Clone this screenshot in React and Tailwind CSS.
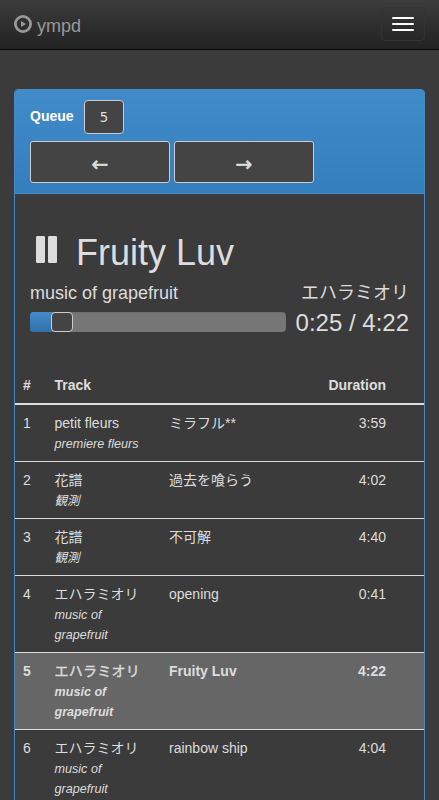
import React from "react";

const tracks = [
  { n: 1, artist: "petit fleurs", album: "premiere fleurs", title: "ミラフル**", time: "3:59" },
  { n: 2, artist: "花譜", album: "観測", title: "過去を喰らう", time: "4:02" },
  { n: 3, artist: "花譜", album: "観測", title: "不可解", time: "4:40" },
  { n: 4, artist: "エハラミオリ", album: "music of grapefruit", title: "opening", time: "0:41" },
  { n: 5, artist: "エハラミオリ", album: "music of grapefruit", title: "Fruity Luv", time: "4:22", active: true },
  { n: 6, artist: "エハラミオリ", album: "music of grapefruit", title: "rainbow ship", time: "4:04" },
];

function Navbar() {
  return (
    <nav className="flex h-[50px] items-start justify-between border-b border-[#080808] bg-gradient-to-b from-[#3c3c3c] to-[#222222] px-[14px]">
      <div className="flex h-[50px] items-center text-[18px] leading-5 text-[#999999]">
        <svg className="-mt-[2px] mr-[5px] h-[18px] w-[18px]" viewBox="0 0 18 18">
          <circle cx="9" cy="9" r="7.6" fill="none" stroke="currentColor" strokeWidth="2.8" />
          <path d="M7 6v6l5-3z" fill="currentColor" />
        </svg>
        <span className="mt-px">ympd</span>
      </div>
      <button className="mt-[7px] flex h-[34px] w-11 flex-col items-center justify-center gap-1 rounded border border-[#333333]">
        <span className="h-[2px] w-[22px] rounded-[1px] bg-white" />
        <span className="h-[2px] w-[22px] rounded-[1px] bg-white" />
        <span className="h-[2px] w-[22px] rounded-[1px] bg-white" />
      </button>
    </nav>
  );
}

function PanelHeading() {
  return (
    <div className="h-[104px] rounded-t-[3px] border-b border-[#428bca] bg-gradient-to-b from-[#428bca] to-[#357ebd] px-[15px] pt-[10px]">
      <div className="flex items-start">
        <b className="mt-[6px] w-[54px] text-[14px] leading-5 text-white">Queue</b>
        <div className="flex h-[34px] w-10 items-center justify-center rounded border border-[#cccccc] bg-[#444444] font-['DejaVu_Sans_Mono',monospace] text-[14px] text-[#dddddd]">
          5
        </div>
      </div>
      <div className="mt-[7px] flex gap-1 font-['DejaVu_Sans',sans-serif] text-[20px] leading-none text-[#dddddd] [-webkit-text-stroke:0.6px_#dddddd]">
        <button className="h-[42px] w-[140px] rounded-[3px] border border-[#cccccc] bg-[#444444] pt-[3px]">←</button>
        <button className="h-[42px] w-[140px] rounded-[3px] border border-[#cccccc] bg-[#444444] pt-[3px]">→</button>
      </div>
    </div>
  );
}

function NowPlaying() {
  return (
    <div className="h-[173px] px-[15px] pt-[39px]">
      <div className="flex h-10 items-center">
        <svg className="-mt-[7px] ml-[6px] mr-[19px] h-[27px] w-[21px]" viewBox="0 0 21 27" fill="#dddddd">
          <rect x="0" y="0" width="9" height="27" rx="1.2" />
          <rect x="12" y="0" width="9" height="27" rx="1.2" />
        </svg>
        <h1 className="text-[36px] leading-10">Fruity Luv</h1>
      </div>
      <div className="mt-[10px] flex justify-between text-[18px] leading-5">
        <span>music of grapefruit</span>
        <span>エハラミオリ</span>
      </div>
      <div className="mt-[7px] flex h-[26px] items-center justify-between">
        <div className="mb-[2px] flex h-5 w-[256px] rounded bg-[#777777] shadow-[inset_0_1px_2px_rgba(0,0,0,0.1)]">
          <div className="h-5 w-[23px] rounded-l bg-gradient-to-b from-[#428bca] to-[#3071a9]" />
          <div className="-ml-[2px] h-5 w-[22px] rounded border border-[#cccccc] bg-[#444444]" />
        </div>
        <span className="text-[24px] leading-[26px]">0:25 / 4:22</span>
      </div>
    </div>
  );
}

function TrackTable() {
  return (
    <table className="w-full table-fixed border-collapse text-[14px] leading-5">
      <colgroup>
        <col className="w-[31.5px]" />
        <col className="w-[114.5px]" />
        <col />
        <col className="w-[80px]" />
        <col className="w-[30px]" />
      </colgroup>
      <thead>
        <tr className="border-b-2 border-[#dddddd] text-left">
          <th className="p-2">#</th>
          <th className="p-2">Track</th>
          <th className="p-2" />
          <th className="p-2 text-right">Duration</th>
          <th />
        </tr>
      </thead>
      <tbody>
        {tracks.map((t) => (
          <tr
            key={t.n}
            className={
              t.active
                ? "border-b border-[#dddddd] bg-[#666666] align-top font-bold"
                : "border-b border-[#dddddd] align-top"
            }
          >
            <td className="p-2">{t.n}</td>
            <td className="p-2">
              <div
                className={
                  t.active
                    ? "h-[21px] whitespace-nowrap font-normal tracking-[0.25px] [-webkit-text-stroke:0.4px_#dddddd]"
                    : "h-[21px]"
                }
              >
                {t.artist}
              </div>
              <div className="-mb-px text-[12.6px] italic">{t.album}</div>
            </td>
            <td className="p-2">
              <div className="h-5">{t.title}</div>
            </td>
            <td className="p-2 text-right">{t.time}</td>
            <td />
          </tr>
        ))}
      </tbody>
    </table>
  );
}

export default function App() {
  return (
    <div className="h-[800px] overflow-hidden bg-[#3b3b3b] font-['Liberation_Sans','Noto_Sans_CJK_JP',sans-serif] text-[#dddddd]">
      <Navbar />
      <main className="ml-[14px] mt-[39px] w-[411px] rounded border border-[#428bca]">
        <PanelHeading />
        <NowPlaying />
        <TrackTable />
      </main>
    </div>
  );
}
